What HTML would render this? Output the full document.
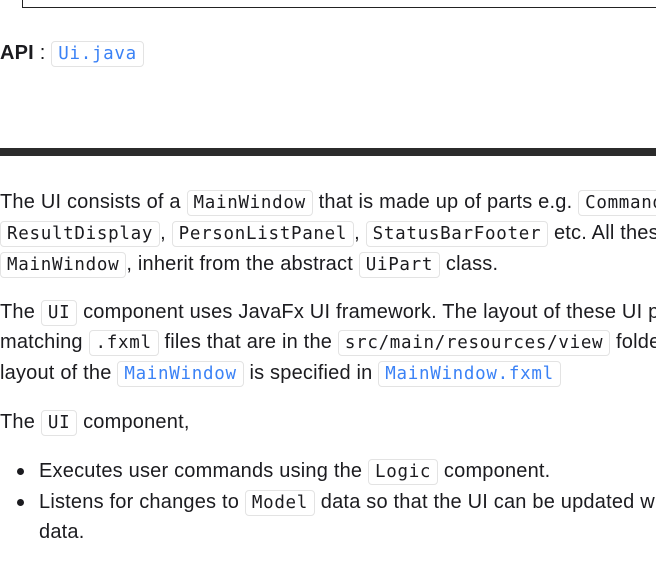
<!DOCTYPE html>
<html><head><meta charset="utf-8"><style>
html,body{margin:0;padding:0;background:#fff;width:656px;height:583px;overflow:hidden;position:relative}
body{font-family:"Liberation Sans",sans-serif;font-size:20px;color:#1b1b1f;letter-spacing:0.2px}
.l{position:absolute;left:0;right:0;overflow:hidden;white-space:nowrap;height:31px;line-height:31px}
code{font-family:"DejaVu Sans Mono",monospace;font-size:17.5px;letter-spacing:0.7px;border:1px solid #e3e3e3;border-radius:4px;padding:2px 6px;background:#fff;color:#1b1b1f}
code.a{color:#3b82f6}
.box{position:absolute;left:22px;top:-10px;width:640px;height:17px;border:1.5px solid #222;border-top:none;border-right:none}
.hr{position:absolute;left:0;top:148px;width:656px;height:8px;background:#2b2b2b}
.b{position:absolute;left:17px;width:7px;height:7px;border-radius:50%;background:#1b1b1f}
</style></head><body>
<div class="box"></div>
<div class="l" style="top:38px"><b>API</b> : <code class="a">Ui.java</code></div>
<div class="hr"></div>
<div class="l" style="top:187px">The UI consists of a <code>MainWindow</code> that is made up of parts e.g. <code>CommandBox</code></div>
<div class="l" style="top:218px"><code>ResultDisplay</code>, <code>PersonListPanel</code>, <code>StatusBarFooter</code> etc. All these</div>
<div class="l" style="top:249px"><code>MainWindow</code>, inherit from the abstract <code>UiPart</code> class.</div>
<div class="l" style="top:297px">The <code>UI</code> component uses JavaFx UI framework. The layout of these UI parts</div>
<div class="l" style="top:327px">matching <code>.fxml</code> files that are in the <code>src/main/resources/view</code> folder</div>
<div class="l" style="top:358px">layout of the <code class="a">MainWindow</code> is specified in <code class="a">MainWindow.fxml</code></div>
<div class="l" style="top:407px">The <code>UI</code> component,</div>
<div class="b" style="top:468px"></div>
<div class="l" style="top:456px;left:39px">Executes user commands using the <code>Logic</code> component.</div>
<div class="b" style="top:499px"></div>
<div class="l" style="top:487px;left:39px">Listens for changes to <code>Model</code> data so that the UI can be updated with</div>
<div class="l" style="top:517px;left:39px">data.</div>
</body></html>
